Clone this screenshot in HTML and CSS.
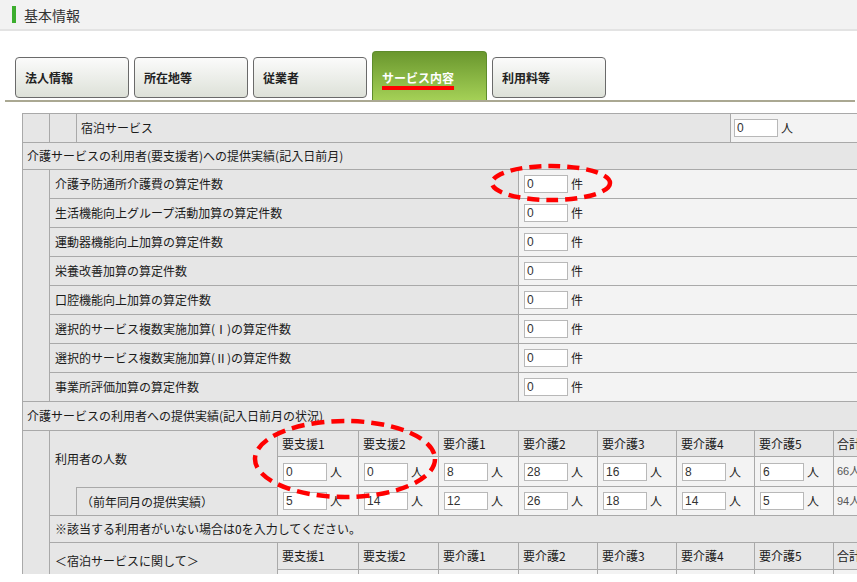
FILE: index.html
```html
<!DOCTYPE html>
<html lang="ja">
<head>
<meta charset="utf-8">
<title>基本情報</title>
<link rel="stylesheet" href="styles.css">
</head>
<body>
<div class="page">
  <header class="topbar"><span class="mark"></span><h1 class="title">基本情報</h1></header>
  <nav class="tabs">
    <div class="tab">法人情報</div>
    <div class="tab">所在地等</div>
    <div class="tab">従業者</div>
    <div class="tab active"><span class="hl">サービス内容</span></div>
    <div class="tab">利用料等</div>
  </nav>

  <div class="frame">
    <div class="row h29">
      <div class="cell w27"></div>
      <div class="cell w27"></div>
      <div class="cell lbl0">宿泊サービス</div>
      <div class="cell val pad4"><input class="num" type="text" value="0"><span class="unit">人</span></div>
    </div>

    <div class="row h27">
      <div class="cell head">介護サービスの利用者(要支援者)への提供実績(記入日前月)</div>
    </div>

    <div class="sec">
      <div class="cell indent"></div>
      <div class="sec-body">
        <div class="row h29"><div class="cell lbl1">介護予防通所介護費の算定件数</div><div class="cell val"><input class="num" type="text" value="0"><span class="unit">件</span></div></div>
        <div class="row h29"><div class="cell lbl1">生活機能向上グループ活動加算の算定件数</div><div class="cell val"><input class="num" type="text" value="0"><span class="unit">件</span></div></div>
        <div class="row h29"><div class="cell lbl1">運動器機能向上加算の算定件数</div><div class="cell val"><input class="num" type="text" value="0"><span class="unit">件</span></div></div>
        <div class="row h29"><div class="cell lbl1">栄養改善加算の算定件数</div><div class="cell val"><input class="num" type="text" value="0"><span class="unit">件</span></div></div>
        <div class="row h29"><div class="cell lbl1">口腔機能向上加算の算定件数</div><div class="cell val"><input class="num" type="text" value="0"><span class="unit">件</span></div></div>
        <div class="row h29"><div class="cell lbl1">選択的サービス複数実施加算(Ⅰ)の算定件数</div><div class="cell val"><input class="num" type="text" value="0"><span class="unit">件</span></div></div>
        <div class="row h29"><div class="cell lbl1">選択的サービス複数実施加算(Ⅱ)の算定件数</div><div class="cell val"><input class="num" type="text" value="0"><span class="unit">件</span></div></div>
        <div class="row h29"><div class="cell lbl1">事業所評価加算の算定件数</div><div class="cell val"><input class="num" type="text" value="0"><span class="unit">件</span></div></div>
      </div>
    </div>

    <div class="row h29">
      <div class="cell head">介護サービスの利用者への提供実績(記入日前月の状況)</div>
    </div>

    <div class="sec">
      <div class="cell indent"></div>
      <div class="sec-body">
        <div class="grp">
          <div class="cell bigl">利用者の人数</div>
          <div class="cols">
            <div class="row h26">
              <div class="cell c1">要支援1</div><div class="cell c2">要支援2</div><div class="cell c3">要介護1</div><div class="cell c4">要介護2</div><div class="cell c5">要介護3</div><div class="cell c6">要介護4</div><div class="cell c7">要介護5</div><div class="cell c8">合計</div>
            </div>
            <div class="row h30">
              <div class="cell val c1"><input class="num" type="text" value="0"><span class="unit">人</span></div>
              <div class="cell val c2"><input class="num" type="text" value="0"><span class="unit">人</span></div>
              <div class="cell val c3"><input class="num" type="text" value="8"><span class="unit">人</span></div>
              <div class="cell val c4"><input class="num" type="text" value="28"><span class="unit">人</span></div>
              <div class="cell val c5"><input class="num" type="text" value="16"><span class="unit">人</span></div>
              <div class="cell val c6"><input class="num" type="text" value="8"><span class="unit">人</span></div>
              <div class="cell val c7"><input class="num" type="text" value="6"><span class="unit">人</span></div>
              <div class="cell val c8 total">66人</div>
            </div>
          </div>
        </div>
        <div class="row h29">
          <div class="cell spacer"></div>
          <div class="cell lbl2">（前年同月の提供実績）</div>
          <div class="cell val c1"><input class="num" type="text" value="5"><span class="unit">人</span></div>
          <div class="cell val c2"><input class="num" type="text" value="14"><span class="unit">人</span></div>
          <div class="cell val c3"><input class="num" type="text" value="12"><span class="unit">人</span></div>
          <div class="cell val c4"><input class="num" type="text" value="26"><span class="unit">人</span></div>
          <div class="cell val c5"><input class="num" type="text" value="18"><span class="unit">人</span></div>
          <div class="cell val c6"><input class="num" type="text" value="14"><span class="unit">人</span></div>
          <div class="cell val c7"><input class="num" type="text" value="5"><span class="unit">人</span></div>
          <div class="cell val c8 total">94人</div>
        </div>
        <div class="row h27">
          <div class="cell note">※該当する利用者がいない場合は0を入力してください。</div>
        </div>
        <div class="grp">
          <div class="cell bigl bigl2">＜宿泊サービスに関して＞</div>
          <div class="cols">
            <div class="row h27">
              <div class="cell c1">要支援1</div><div class="cell c2">要支援2</div><div class="cell c3">要介護1</div><div class="cell c4">要介護2</div><div class="cell c5">要介護3</div><div class="cell c6">要介護4</div><div class="cell c7">要介護5</div><div class="cell c8">合計</div>
            </div>
            <div class="row h30">
              <div class="cell val c1"></div><div class="cell val c2"></div><div class="cell val c3"></div><div class="cell val c4"></div><div class="cell val c5"></div><div class="cell val c6"></div><div class="cell val c7"></div><div class="cell val c8"></div>
            </div>
          </div>
        </div>
      </div>
    </div>
  </div>

  <svg class="annot" width="857" height="582" viewBox="0 0 857 582" aria-hidden="true">
    <ellipse cx="551" cy="183" rx="59" ry="17" fill="none" stroke="#ff0000" stroke-width="4.5" stroke-dasharray="12 7"/>
    <ellipse cx="345" cy="459" rx="90" ry="38" fill="none" stroke="#ff0000" stroke-width="4.5" stroke-dasharray="13 7"/>
  </svg>
</div>
</body>
</html>
```

FILE: styles.css
```css
* { box-sizing: border-box; }

html, body {
  margin: 0;
  padding: 0;
  background: #ffffff;
}

body {
  font-family: "Noto Sans CJK JP", "Noto Sans", sans-serif;
  font-size: 12px;
  color: #1a1a1a;
  overflow: hidden;
}

.page {
  position: relative;
  width: 857px;
  height: 574px;
  overflow: hidden;
}

/* header */
.topbar {
  height: 31px;
  background: #f2f2f2;
  border-bottom: 2px solid #e3e3e3;
  display: flex;
  align-items: center;
  padding-left: 12px;
}
.mark {
  width: 4px;
  height: 17px;
  background: #3cae2e;
  margin-right: 8px;
}
.title {
  margin: 0;
  font-size: 14px;
  font-weight: normal;
  color: #333;
  line-height: 1;
}

/* tabs */
.tabs {
  display: flex;
  align-items: flex-end;
  gap: 5px;
  margin: 0 2px 0 5px;
  padding: 20px 0 0 10px;
  border-bottom: 2px solid #aaa892;
}
.tab {
  width: 114px;
  height: 41px;
  margin-bottom: 2px;
  border: 1.5px solid #6a6a6a;
  border-radius: 4px;
  background: linear-gradient(#fbfbfb, #dde1d8);
  padding: 0 9px;
  display: flex;
  align-items: center;
  font-weight: bold;
  color: #222;
  line-height: 1;
}
.tab.active {
  width: 115px;
  height: 49px;
  margin-bottom: 0;
  border-color: #5e8c2c;
  border-bottom: none;
  border-radius: 4px 4px 0 0;
  background: linear-gradient(#6a972e, #a4d056);
  color: #ffffff;
  padding-top: 3px;
}
.hl {
  text-decoration: underline 4px #ff0000;
  text-underline-offset: 3px;
}

/* table frame */
.frame {
  margin: 11px 0 0 22px;
  width: 900px;
  border-top: 1px solid #a9a9a9;
  border-left: 1px solid #a9a9a9;
}
.row { display: flex; }
.h26 { height: 26px; }
.h27 { height: 27px; }
.h29 { height: 29px; }
.h30 { height: 30px; }

.cell {
  flex: none;
  display: flex;
  align-items: center;
  padding: 0 5px;
  background: #e6e6e6;
  border-right: 1px solid #a9a9a9;
  border-bottom: 1px solid #a9a9a9;
  white-space: nowrap;
  line-height: 1;
}
.val { background: #f3f3f3; flex: 1 1 auto; }
.pad4 { padding-left: 3px; }
.w27 { width: 27px; }
.lbl0 { width: 654px; padding-left: 4px; }
.head { flex: 1 1 auto; padding-left: 4px; }
.note { flex: 1 1 auto; }

.sec { display: flex; }
.indent { width: 27px; }
.sec-body { flex: 1 1 auto; display: flex; flex-direction: column; }
.lbl1 { width: 469px; }

.grp { display: flex; }
.bigl { width: 228px; border-bottom: none; }
.bigl2 { align-items: flex-start; padding-top: 12px; }
.cols { flex: 1 1 auto; display: flex; flex-direction: column; }
.spacer { width: 27px; border-right: 1px solid #a9a9a9; border-bottom: 1px solid #a9a9a9; }
.lbl2 { width: 201px; border-top: 1px solid #a9a9a9; padding-left: 4px; }

.c1 { width: 81px; flex: none; padding-left: 4px; }
.c2 { width: 80px; flex: none; padding-left: 4px; }
.c3 { width: 80px; flex: none; padding-left: 4px; }
.c4 { width: 79px; flex: none; padding-left: 4px; }
.c5 { width: 79px; flex: none; padding-left: 4px; }
.c6 { width: 78px; flex: none; padding-left: 4px; }
.c7 { width: 79px; flex: none; padding-left: 4px; }
.c8 { width: 80px; flex: none; padding-left: 3px; }
.val.c1, .val.c2, .val.c3, .val.c4, .val.c5, .val.c6, .val.c7 { padding-left: 5px; }

.num {
  width: 44px;
  height: 18px;
  margin: 0;
  padding: 0 2px;
  border: 1px solid #b8b8b8;
  background: #ffffff;
  font-family: "Liberation Sans", "Noto Sans", sans-serif;
  font-size: 12px;
  color: #333;
  line-height: 16px;
}
.unit { margin-left: 3px; color: #222; }
.total {
  font-family: "Liberation Sans", "Noto Sans CJK JP", sans-serif;
  font-size: 11px;
  color: #555;
}

/* annotation overlay */
.annot {
  position: absolute;
  left: 0;
  top: 0;
  pointer-events: none;
}
```
